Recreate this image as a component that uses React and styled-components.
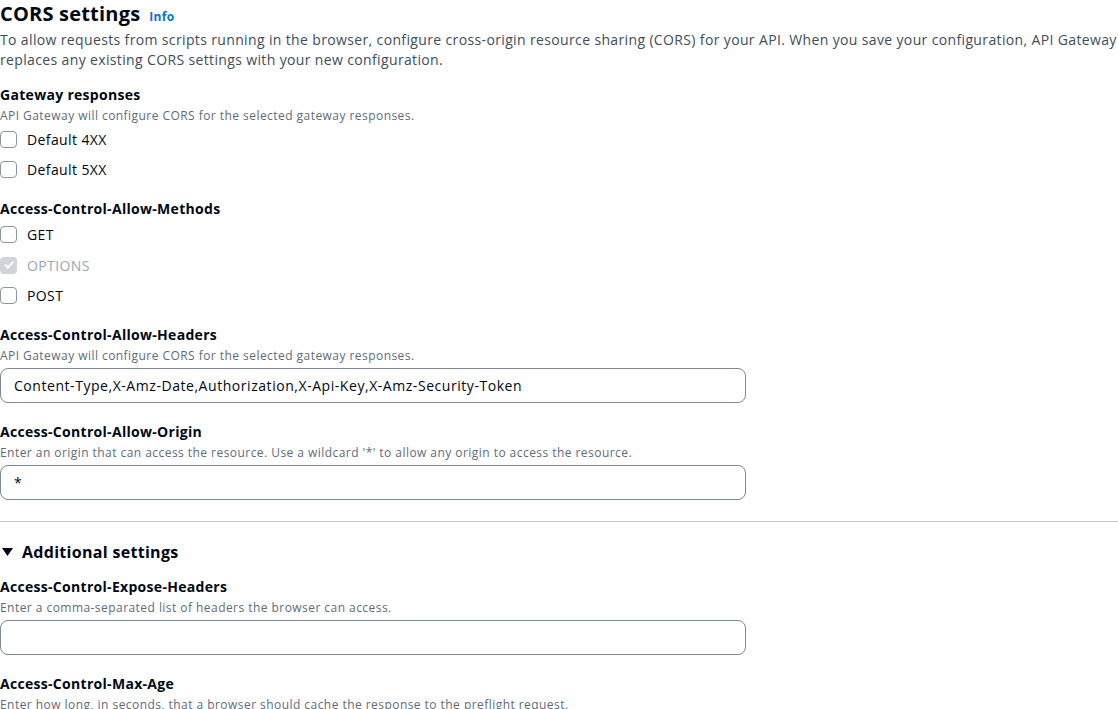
import React from 'react';
import styled, { createGlobalStyle } from 'styled-components';

const GlobalStyle = createGlobalStyle`
  html, body {
    margin: 0;
    padding: 0;
    background: #ffffff;
  }
  body {
    font-family: "Open Sans", "Noto Sans", "Liberation Sans", sans-serif;
    color: #000716;
    overflow: hidden;
  }
`;

const Page = styled.div`
  width: 1118px;
  height: 709px;
  overflow: hidden;
`;

const Header = styled.div`
  display: flex;
  align-items: baseline;
  gap: 9px;
  height: 28px;
`;

const Title = styled.h2`
  margin: 0;
  font-size: 20px;
  line-height: 28px;
  font-weight: 700;
  letter-spacing: 0.2px;
`;

const InfoLink = styled.a`
  font-size: 12px;
  font-weight: 700;
  color: #0972d3;
  text-decoration: none;
  letter-spacing: 0.3px;
`;

const Intro = styled.p`
  margin: 2px 0 0;
  font-size: 14px;
  line-height: 20px;
  color: #414d5c;
  white-space: nowrap;
  letter-spacing: 0.36px;
`;

const Form = styled.div`
  display: flex;
  flex-direction: column;
  gap: 18px;
  margin-top: ${(p) => p.$top || 14}px;
`;

const Field = styled.div`
  display: flex;
  flex-direction: column;
`;

const Label = styled.div`
  font-size: 14px;
  line-height: 22px;
  font-weight: 700;
  letter-spacing: 0.3px;
`;

const Description = styled.div`
  margin-top: 2px;
  font-size: 12px;
  line-height: 16px;
  color: #5f6b7a;
  letter-spacing: 0.45px;
  white-space: nowrap;
`;

const Options = styled.div`
  display: flex;
  flex-direction: column;
  gap: 10.5px;
  margin-top: 5px;
`;

const OptionRow = styled.label`
  display: flex;
  align-items: center;
  gap: 10px;
  height: 20px;
  font-size: 14px;
  letter-spacing: 0.4px;
  color: ${(p) => (p.$disabled ? '#9ba7b6' : '#000716')};
`;

const Box = styled.span`
  box-sizing: border-box;
  width: 17px;
  height: 17px;
  flex: none;
  border-radius: 4px;
  border: ${(p) => (p.$disabled ? 'none' : '1.5px solid #8c96a3')};
  background: ${(p) => (p.$disabled ? '#d1d5db' : '#ffffff')};
  display: flex;
  align-items: center;
  justify-content: center;
`;

const TextInput = styled.input`
  box-sizing: border-box;
  margin-top: 4px;
  width: 746px;
  height: 35px;
  padding: 0 13px;
  border: 1px solid #7d8998;
  border-radius: 8px;
  font-family: inherit;
  font-size: 14px;
  letter-spacing: 0.55px;
  color: #000716;
  background: #ffffff;
  outline: none;
`;

const Divider = styled.hr`
  margin: 21px 0 0;
  border: none;
  border-top: 1px solid #c6c6cd;
  width: 1118px;
`;

const Expander = styled.div`
  display: flex;
  align-items: center;
  gap: 8px;
  margin-top: 18px;
  height: 24px;
  font-size: 16px;
  font-weight: 700;
  letter-spacing: 0.3px;
`;

const Caret = () => (
  <svg width="14" height="14" viewBox="0 0 14 14">
    <polygon points="2,3 13,3 7.5,11" fill="#000716" />
  </svg>
);

const Check = () => (
  <svg width="12" height="12" viewBox="0 0 12 12">
    <polyline points="2.5,6.2 5,8.7 9.8,3.3" fill="none" stroke="#ffffff" strokeWidth="2" strokeLinecap="round" strokeLinejoin="round" />
  </svg>
);

function Checkbox({ label, checked, disabled }) {
  return (
    <OptionRow $disabled={disabled}>
      <Box $disabled={disabled}>{checked && <Check />}</Box>
      {label}
    </OptionRow>
  );
}

function InputField({ label, description, value }) {
  return (
    <Field>
      <Label>{label}</Label>
      {description && <Description>{description}</Description>}
      <TextInput defaultValue={value} />
    </Field>
  );
}

export default function App() {
  return (
    <Page>
      <GlobalStyle />
      <Header>
        <Title>CORS settings</Title>
        <InfoLink href="#">Info</InfoLink>
      </Header>
      <Intro>
        To allow requests from scripts running in the browser, configure cross-origin resource sharing (CORS) for your API. When you save your configuration, API Gateway
        <br />
        replaces any existing CORS settings with your new configuration.
      </Intro>

      <Form>
        <Field>
          <Label>Gateway responses</Label>
          <Description>API Gateway will configure CORS for the selected gateway responses.</Description>
          <Options>
            <Checkbox label="Default 4XX" />
            <Checkbox label="Default 5XX" />
          </Options>
        </Field>

        <Field>
          <Label>Access-Control-Allow-Methods</Label>
          <Options>
            <Checkbox label="GET" />
            <Checkbox label="OPTIONS" checked disabled />
            <Checkbox label="POST" />
          </Options>
        </Field>

        <InputField
          label="Access-Control-Allow-Headers"
          description="API Gateway will configure CORS for the selected gateway responses."
          value="Content-Type,X-Amz-Date,Authorization,X-Api-Key,X-Amz-Security-Token"
        />

        <InputField
          label="Access-Control-Allow-Origin"
          description="Enter an origin that can access the resource. Use a wildcard '*' to allow any origin to access the resource."
          value="*"
        />
      </Form>

      <Divider />

      <Expander>
        <Caret />
        Additional settings
      </Expander>

      <Form $top={12}>
        <InputField
          label="Access-Control-Expose-Headers"
          description="Enter a comma-separated list of headers the browser can access."
          value=""
        />
        <Field>
          <Label>Access-Control-Max-Age</Label>
          <Description>Enter how long, in seconds, that a browser should cache the response to the preflight request.</Description>
        </Field>
      </Form>
    </Page>
  );
}
